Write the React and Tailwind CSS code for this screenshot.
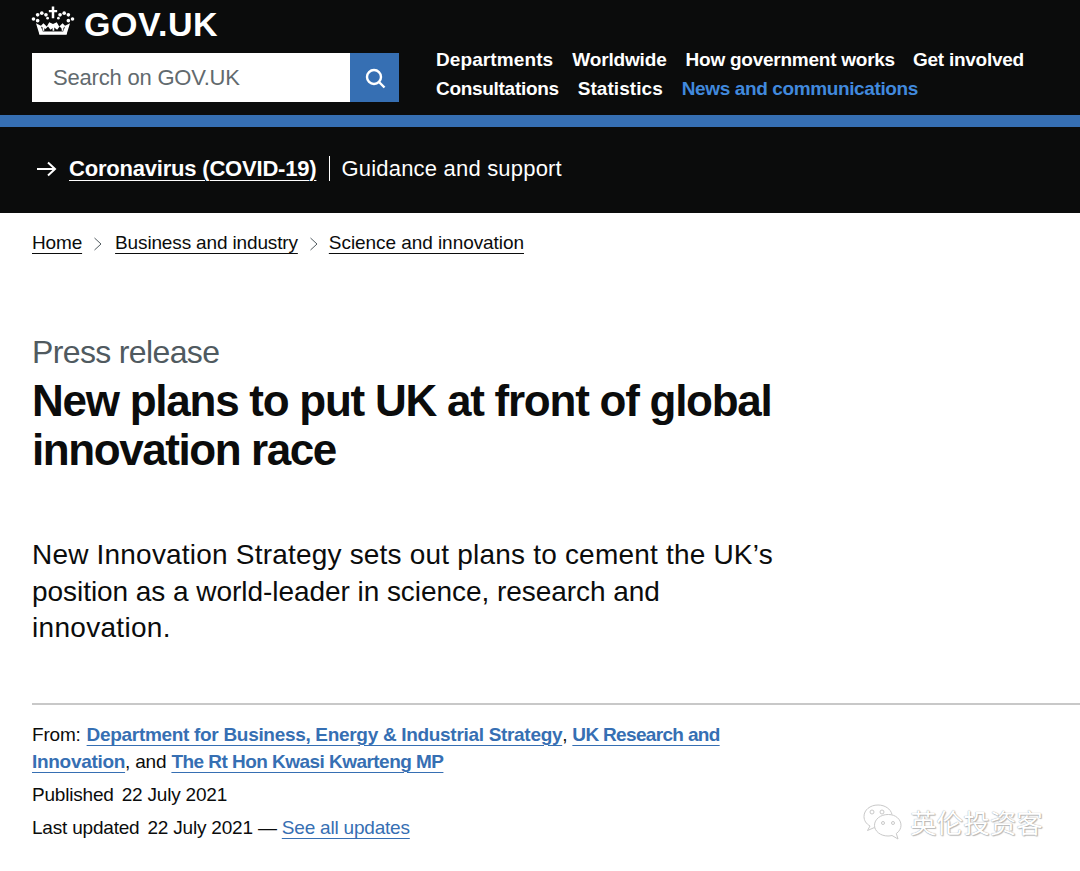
import React from "react";

const sans = "font-['Liberation_Sans',Arial,sans-serif]";

function Crown() {
  const dots = [[3,15],[8,10],[13,8],[18,10],[35,10],[40,8],[45,10],[50,15],[8,17],[45,17]];
  return (
    <svg width="44" height="33" viewBox="0 0 53 36" className="shrink-0 -ml-[1px]" fill="#fff">
      {dots.map(([x, y], i) => <circle key={i} cx={x} cy={y} r="2.2" />)}
      <circle cx="20" cy="14" r="1.6" /><circle cx="33" cy="14" r="1.6" />
      <path d="M25 0h3v4h3.500v3H28v7h-3V7h-3.500V4H25z" />
      <path d="M6 20l6 3 3-3 4 4 3-5 4.500 2 4.500-2 3 5 4-4 3 3 6-3-4 13H10z M12 24l2.500 7h24l2.500-7-3.500 3-3-3-3 4-4-3-4 3-3-4-3 3z" fillRule="evenodd" />
      <rect x="10" y="30" width="33" height="4" />
      <path d="M14 25h2v4h-2zM26 24h2v5h-2zM37 25h2v4h-2z" />
    </svg>
  );
}

function WeChat() {
  return (
    <svg width="42" height="38" viewBox="0 0 42 38" fill="none" stroke="#c9c9c9" strokeWidth="1">
      <path d="M17 2c-8 0-14 5-14 11.500 0 4 2.200 7.300 6 9.500l-2.500 4.500 6.500-2.800c1 .2 2 .3 3 .3" fill="#fff" />
      <path d="M17 2c7 0 12.800 4 14 9.500" />
      <path d="M27 11.500c-7.500 0-13.500 4.800-13.500 10.800s6 10.700 13.500 10.700c1.400 0 2.700-.2 4-.5l6 3.500-1.700-5.500c3-2 4.700-5 4.700-8.200 0-6-5.500-10.800-12.500-10.800z" fill="#fff" />
      <circle cx="11" cy="9" r="2" /><circle cx="21" cy="9" r="2" />
      <circle cx="22" cy="20" r="1.500" /><circle cx="32" cy="20" r="1.500" />
    </svg>
  );
}

const Chevron = ({ right }) => (
  <svg width="10" height="16" viewBox="0 0 10 16" fill="none" stroke="#505a5f" strokeWidth="1" className={right ? "ml-[11px] mr-[10px]" : "ml-[11px] mr-[12px]"}>
    <path d="M1.500 2l6.500 6-6.500 6" />
  </svg>
);

const crumbLink = "text-[#0b0c0c] underline underline-offset-[4px] decoration-1";
const blueLink = "text-[#366fb3] font-bold underline underline-offset-[4px] decoration-1";

export default function App() {
  return (
    <div className={`relative w-[1080px] h-[871px] overflow-hidden bg-white text-[#0b0c0c] ${sans}`}>
      <header className="h-[115px] bg-[#0b0c0c] pl-8 text-white flex flex-col">
        <div className="h-[53px] flex items-start pt-[5px] gap-[9px]">
          <Crown />
          <span className="text-[34px] leading-[36px] mt-[1px] font-bold tracking-[0.5px]">GOV.UK</span>
        </div>
        <div className="flex">
          <div className="w-[367px] h-[49px] flex shrink-0">
            <div className="w-[318px] bg-white text-[#626a6e] text-[22px] leading-[49px] pl-[21px] tracking-[-0.2px]">Search on GOV.UK</div>
            <div className="w-[49px] bg-[#366fb3] flex items-center justify-center">
              <svg width="24" height="24" viewBox="0 0 24 24" fill="none" stroke="#fff" strokeWidth="2.400">
                <circle cx="11" cy="11" r="7" />
                <path d="M16 16l5.500 5.500" />
              </svg>
            </div>
          </div>
          <nav className="ml-[37px] -mt-[8px] text-[19px] leading-[29px] font-bold tracking-[-0.25px] flex flex-col">
            <div className="flex gap-[19px]">
              <span className="tracking-[0.1px]">Departments</span><span className="tracking-[-0.15px]">Worldwide</span><span>How government works</span><span className="-ml-[1px]">Get involved</span>
            </div>
            <div className="flex gap-[19px]">
              <span className="tracking-[-0.3px]">Consultations</span><span className="tracking-[0.05px]">Statistics</span><span className="text-[#4189dd] tracking-[-0.38px]">News and communications</span>
            </div>
          </nav>
        </div>
      </header>
      <div className="h-[12px] bg-[#366fb3]" />
      <section className="h-[86px] bg-[#0b0c0c] text-white pl-8 pb-[4px] flex items-center text-[22px]">
        <svg width="22" height="18" viewBox="0 0 22 18" fill="none" stroke="#fff" strokeWidth="2" className="ml-[4px] mr-[11px] mt-[1px]">
          <path d="M1 9h18M12 2.500l7 6.500-7 6.500" />
        </svg>
        <span className="font-bold underline underline-offset-[4px] decoration-1 tracking-[-0.2px]">Coronavirus (COVID-19)</span>
        <span className="w-px h-[25px] bg-white ml-[13px] mr-[11px]" />
        <span className="tracking-[0.2px]">Guidance and support</span>
      </section>
      <nav className="h-[60px] pl-8 flex items-center text-[19px] tracking-[-0.15px] pt-[1px]">
        <span className={crumbLink}>Home</span><Chevron />
        <span className={crumbLink}>Business and industry</span><Chevron right />
        <span className={`${crumbLink} tracking-[-0.06px]`}>Science and innovation</span>
      </nav>
      <main className="pl-8">
        <p className="mt-[57px] text-[32px] leading-[44px] text-[#505a5f] tracking-[-0.64px]">Press release</p>
        <h1 className="text-[44px] leading-[49px] font-bold tracking-[-1.25px] mt-[2px] w-[800px]">
          New plans to put UK at front of global<br /><span className="tracking-[-1.42px]">innovation race</span>
        </h1>
        <p className="mt-[63px] text-[28px] leading-[36.500px] w-[800px]">
          <span className="tracking-[0.2px]">New Innovation Strategy sets out plans to cement the UK’s</span><br />
          <span className="tracking-[-0.05px]">position as a world-leader in science, research and</span><br />
          <span className="tracking-[0.3px]">innovation.</span>
        </p>
        <div className="mt-[56px] border-t-[2px] border-[#c8c8c8] pt-[16px] text-[19px] tracking-[-0.2px]">
          <p className="leading-[27px] w-[740px]">
            From:<span className="inline-block w-[6px]" /><span className={`${blueLink} tracking-[-0.31px]`}>Department for Business, Energy &amp; Industrial Strategy</span>, <span className={`${blueLink} tracking-[-0.67px]`}>UK Research and</span><br />
            <span className={`${blueLink} tracking-[-0.3px]`}>Innovation</span>, and <span className={`${blueLink} tracking-[-0.54px]`}>The Rt Hon Kwasi Kwarteng MP</span>
          </p>
          <p className="leading-[27px] mt-[6px]">Published<span className="inline-block w-[8px]" />22 July 2021</p>
          <p className="leading-[27px] mt-[6px]">Last updated<span className="inline-block w-[8px]" />22 July 2021 — <span className="text-[#366fb3] underline underline-offset-[4px] decoration-1">See all updates</span></p>
        </div>
      </main>
      <div className="absolute left-[861px] top-[803px] flex items-center gap-[7px]">
        <WeChat />
        <span className="text-[26.600px] leading-[36px] text-white font-['Noto_Sans_CJK_SC',sans-serif] [text-shadow:0_0_1px_#8a8a8a,1px_1px_1px_#bdbdbd]">英伦投资客</span>
      </div>
    </div>
  );
}
